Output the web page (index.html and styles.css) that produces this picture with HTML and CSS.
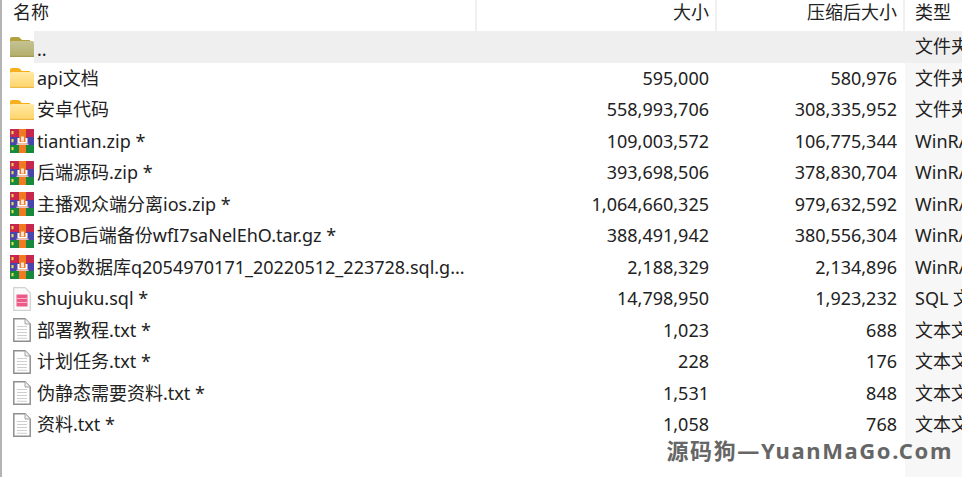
FILE: index.html
```html
<!DOCTYPE html>
<html lang="zh-CN">
<head>
    <meta charset="UTF-8">
    <title>名称</title>
    <link rel="stylesheet" href="styles.css">
</head>
<body>
    <svg class="defs" width="0" height="0">
        <defs>
            <linearGradient id="fold" x1="0" y1="0" x2="0" y2="1">
                <stop offset="0" stop-color="#ffe9a3"/>
                <stop offset="1" stop-color="#fdd468"/>
            </linearGradient>
            <linearGradient id="fold-up" x1="0" y1="0" x2="0" y2="1">
                <stop offset="0" stop-color="#c4c291"/>
                <stop offset="1" stop-color="#b3ae6c"/>
            </linearGradient>
        </defs>
        <symbol id="folder" viewBox="0 0 24 20">
            <path d="M0 5 V2 Q0 0 2 0 H8 Q9 0 10 1 L12 3 H20 V5 Z" fill="#f6b01e"/>
            <rect x="0" y="4" width="24" height="16" rx="1.5" fill="url(#fold)"/>
            <rect x="0" y="18.8" width="24" height="1.2" fill="#edbb45"/>
        </symbol>
        <symbol id="folder-up" viewBox="0 0 24 20">
            <path d="M0 5 V2 Q0 0 2 0 H8 Q9 0 10 1 L12 3 H20 V5 Z" fill="#b3a13f"/>
            <rect x="0" y="4" width="24" height="16" rx="1.5" fill="url(#fold-up)"/>
            <rect x="0" y="18.8" width="24" height="1.2" fill="#a39c58"/>
        </symbol>
        <symbol id="rar" viewBox="0 0 24 24">
            <rect x="0" y="0" width="24" height="8" fill="#c7274f"/>
            <rect x="0" y="8" width="24" height="8" fill="#4a45ad"/>
            <rect x="0" y="16" width="24" height="8" fill="#17893c"/>
            <rect x="9" y="0" width="7" height="24" fill="#ef7a1f"/>
            <rect x="1.5" y="2" width="2" height="3.2" fill="#f6dc4a"/>
            <rect x="1.5" y="10" width="2" height="3.2" fill="#f6dc4a"/>
            <rect x="1.5" y="18" width="2" height="3.2" fill="#f6dc4a"/>
            <path d="M7.5 9 H9.5 V13 H15.5 V9 H17.5 V14.6 H7.5 Z" fill="#fff"/>
            <rect x="11" y="7.5" width="3" height="5" fill="#f9e2d4"/>
            <rect x="6.5" y="14.6" width="12" height="1.4" fill="#e6c4bb"/>
        </symbol>
        <symbol id="sql" viewBox="0 0 18 24">
            <path d="M.7 .7 H12 L17.3 6 V23.3 H.7 Z" fill="#fafafa" stroke="#d2d2d2" stroke-width="1.2"/>
            <path d="M3.5 7.5 H14.5 V19.5 H3.5 Z" fill="#ec5a87"/>
            <path d="M3.5 11.5 H14.5 M3.5 15.5 H14.5" fill="none" stroke="#f6b3ca" stroke-width="1"/>
        </symbol>
        <symbol id="txt" viewBox="0 0 18 24">
            <path d="M.8 .8 H12 L17.2 6 V23.2 H.8 Z" fill="#fff" stroke="#8f8f8f" stroke-width="1.5"/>
            <path d="M12 .8 V6 H17.2" fill="#eee" stroke="#a5a5a5" stroke-width="1"/>
            <path d="M4 8.5 H14 M4 11.5 H14 M4 14.5 H14 M4 17.5 H14 M4 20.3 H14" stroke="#cfcfcf" stroke-width="1.1"/>
        </symbol>
    </svg>

    <div class="list">
        <div class="row head">
            <div class="name">名称</div>
            <div class="size">大小</div>
            <div class="packed">压缩后大小</div>
            <div class="type">类型</div>
        </div>

        <div class="row parent">
            <div class="name"><svg class="ico wide"><use href="#folder-up"/></svg><span class="up">..</span></div>
            <div class="size"></div><div class="packed"></div><div class="type">文件夹</div>
        </div>
        <div class="row">
            <div class="name"><svg class="ico wide"><use href="#folder"/></svg>api文档</div>
            <div class="size">595,000</div><div class="packed">580,976</div><div class="type">文件夹</div>
        </div>
        <div class="row">
            <div class="name"><svg class="ico wide"><use href="#folder"/></svg>安卓代码</div>
            <div class="size">558,993,706</div><div class="packed">308,335,952</div><div class="type">文件夹</div>
        </div>
        <div class="row">
            <div class="name"><svg class="ico"><use href="#rar"/></svg>tiantian.zip *</div>
            <div class="size">109,003,572</div><div class="packed">106,775,344</div><div class="type">WinRAR</div>
        </div>
        <div class="row">
            <div class="name"><svg class="ico"><use href="#rar"/></svg>后端源码.zip *</div>
            <div class="size">393,698,506</div><div class="packed">378,830,704</div><div class="type">WinRAR</div>
        </div>
        <div class="row">
            <div class="name"><svg class="ico"><use href="#rar"/></svg>主播观众端分离ios.zip *</div>
            <div class="size">1,064,660,325</div><div class="packed">979,632,592</div><div class="type">WinRAR</div>
        </div>
        <div class="row">
            <div class="name"><svg class="ico"><use href="#rar"/></svg>接OB后端备份wfI7saNelEhO.tar.gz *</div>
            <div class="size">388,491,942</div><div class="packed">380,556,304</div><div class="type">WinRAR</div>
        </div>
        <div class="row">
            <div class="name"><svg class="ico"><use href="#rar"/></svg>接ob数据库q2054970171_20220512_223728.sql.g...</div>
            <div class="size">2,188,329</div><div class="packed">2,134,896</div><div class="type">WinRAR</div>
        </div>
        <div class="row">
            <div class="name"><svg class="ico doc"><use href="#sql"/></svg>shujuku.sql *</div>
            <div class="size">14,798,950</div><div class="packed">1,923,232</div><div class="type">SQL 文件</div>
        </div>
        <div class="row">
            <div class="name"><svg class="ico doc"><use href="#txt"/></svg>部署教程.txt *</div>
            <div class="size">1,023</div><div class="packed">688</div><div class="type">文本文档</div>
        </div>
        <div class="row">
            <div class="name"><svg class="ico doc"><use href="#txt"/></svg>计划任务.txt *</div>
            <div class="size">228</div><div class="packed">176</div><div class="type">文本文档</div>
        </div>
        <div class="row">
            <div class="name"><svg class="ico doc"><use href="#txt"/></svg>伪静态需要资料.txt *</div>
            <div class="size">1,531</div><div class="packed">848</div><div class="type">文本文档</div>
        </div>
        <div class="row">
            <div class="name"><svg class="ico doc"><use href="#txt"/></svg>资料.txt *</div>
            <div class="size">1,058</div><div class="packed">768</div><div class="type">文本文档</div>
        </div>
        <div class="row filler">
            <div class="name"></div><div class="size"></div><div class="packed"></div><div class="type"></div>
        </div>
    </div>

    <div class="mark">源码狗—YuanMaGo.Com</div>
</body>
</html>
```

FILE: styles.css
```css
body {
    margin: 0;
    width: 962px;
    height: 477px;
    overflow: hidden;
    background-color: white;
    color: #222;
    font-family: "Noto Sans", "Noto Sans CJK SC", sans-serif;
    font-size: 18px;
    position: relative;
}
.defs {
    position: absolute;
}
.list {
    height: 477px;
    display: flex;
    flex-direction: column;
    margin-left: 2px;
    box-shadow: -2px 0 0 #b4b4b4;
}
.row {
    display: flex;
    height: 31.5px;
    line-height: 31.5px;
    flex: none;
}
.row > div {
    white-space: nowrap;
    overflow: hidden;
}
.name {
    width: 475px;
    display: flex;
    align-items: center;
    padding-left: 8px;
    box-sizing: border-box;
}
.size {
    width: 240px;
    text-align: right;
    padding-right: 8px;
    box-sizing: border-box;
}
.packed {
    width: 188px;
    text-align: right;
    padding-right: 8px;
    box-sizing: border-box;
}
.type {
    flex: 1;
    padding-left: 10px;
    background-color: #f7f7f7;
}
.head {
    height: 31px;
    line-height: 25px;
}
.head > div {
    background-color: white;
    border-right: 2px solid #f0f0f0;
}
.head .name {
    align-items: flex-start;
    padding-left: 11px;
}
.head .size,
.head .packed {
    padding-right: 6px;
}
.head .type {
    border-right: 0;
}
.parent .size,
.parent .packed,
.parent .type {
    background-color: #efefef;
}
.parent .name {
    background: linear-gradient(to right, white 32px, #efefef 32px);
}
.up {
    line-height: 1;
    margin-top: 4px;
}
.ico {
    width: 24px;
    height: 24px;
    flex: none;
    margin-right: 3px;
}
.ico.wide {
    height: 20px;
}
.ico.doc {
    width: 18px;
    margin: 0 6px 0 3px;
}
.filler {
    flex: 1;
}
.mark {
    position: absolute;
    right: 9px;
    top: 436px;
    color: #666;
    font-size: 22px;
    font-weight: bold;
    letter-spacing: 1.6px;
    line-height: 28px;
}
```
